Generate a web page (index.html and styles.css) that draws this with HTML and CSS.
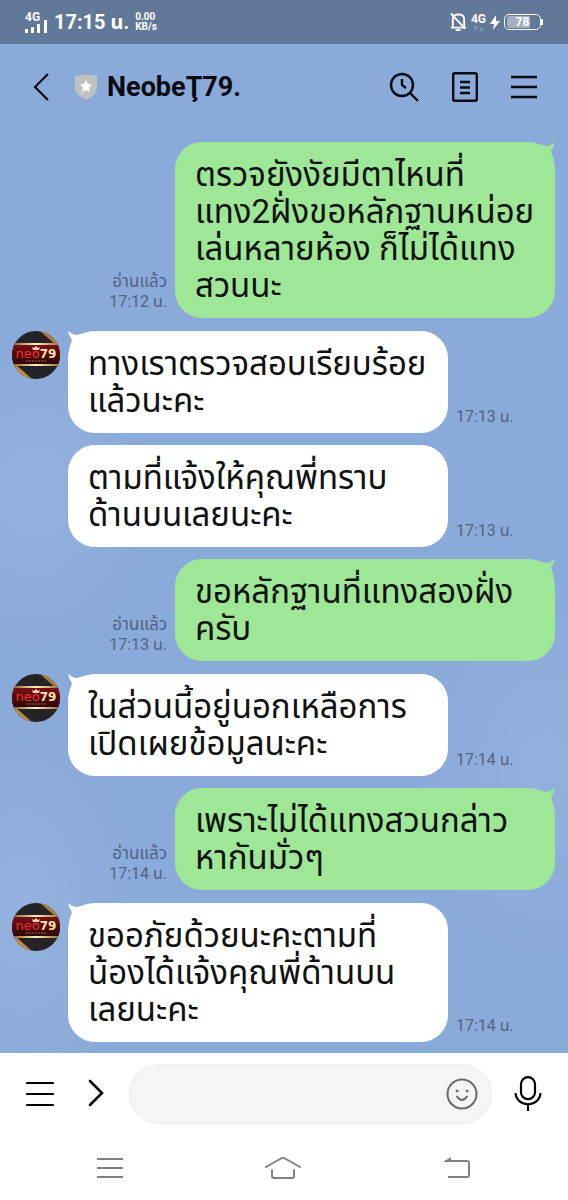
FILE: index.html
```
<!DOCTYPE html>
<html lang="th">
<head>
    <meta charset="UTF-8">
    <meta name="viewport" content="width=device-width, initial-scale=1.0">
    <title>NeobeŢ79.</title>
    <link rel="stylesheet" href="styles.css">
</head>
<body>
    <!-- Shared avatar drawing -->
    <svg class="defs" aria-hidden="true">
        <defs>
            <linearGradient id="gold" x1="0" x2="1">
                <stop offset="0" stop-color="#8a5a1c"/>
                <stop offset="0.5" stop-color="#fff3c4"/>
                <stop offset="1" stop-color="#9a6a24"/>
            </linearGradient>
            <linearGradient id="red" x1="0" y1="0" x2="0" y2="1">
                <stop offset="0" stop-color="#7c1016"/>
                <stop offset="1" stop-color="#2a0507"/>
            </linearGradient>
            <clipPath id="round"><circle cx="24" cy="24" r="24"/></clipPath>
        </defs>
        <symbol id="avatar" viewBox="0 0 48 48">
            <g clip-path="url(#round)">
                <rect width="48" height="48" fill="#242426"/>
                <path d="M28 0L44 14H48V0z" fill="#b27c32"/>
                <path d="M34 0L48 12V0z" fill="#3a2a18"/>
                <path d="M3 33L20 48H14L0 36z" fill="#c08a3c"/>
                <rect y="13" width="48" height="21" fill="url(#red)"/>
                <rect y="12" width="48" height="2" fill="url(#gold)"/>
                <rect y="33" width="48" height="2" fill="url(#gold)"/>
                <path d="M21 19l-1-3 2 1 2-2 2 2 2-1-1 3z" fill="#ffd9b0"/>
                <path d="M14 30H34" stroke="#9a6a34" stroke-dasharray="2 1"/>
            </g>
        </symbol>
    </svg>

    <div class="status-bar">
        <div class="status-left">
            <div class="signal">
                <span>4G</span>
                <svg width="23" height="13" viewBox="0 0 23 13" fill="#fff">
                    <rect x="0" y="9" width="3" height="4"/>
                    <rect x="6" y="7" width="3" height="6"/>
                    <rect x="12" y="4" width="3" height="9"/>
                    <rect x="19" y="0" width="3" height="13"/>
                </svg>
            </div>
            <span class="clock">17:15 น.</span>
            <div class="speed">0.00<br>KB/s</div>
        </div>
        <div class="status-right">
            <svg width="17" height="20" viewBox="0 0 18 20" fill="none" stroke="#fff" stroke-width="2">
                <path d="M3 16V7C3 4 5 2 9 2s6 2 6 5v9M1 16h16"/>
                <path d="M1 1l15 16"/>
                <path d="M6 18.500h5"/>
            </svg>
            <div class="net">
                <span>4G</span>
                <svg width="11" height="5" viewBox="0 0 11 5" fill="#8193ae"><path d="M0 0h5L2.500 5zM6 5h5L8.500 0z"/></svg>
            </div>
            <svg width="10" height="15" viewBox="0 0 10 15" fill="#fff"><path d="M6 0L0 9h4l-1 6 7-9H6z"/></svg>
            <div class="battery">78</div>
        </div>
    </div>

    <header class="header">
        <button class="icon-btn" aria-label="Back">
            <svg width="18" height="30" viewBox="0 0 18 30" fill="none" stroke="#080a10" stroke-width="2.200"><path d="M17 2L4 15l13 13"/></svg>
        </button>
        <svg class="shield" width="24" height="26" viewBox="0 0 24 26">
            <path d="M1 2Q12-1 23 2V15Q22 21 12 26Q2 21 1 15z" fill="#bfc1c2"/>
            <path d="M12 6l2 4 4 .5-3 3 .8 4.500L12 16l-3.800 2L9 13.500l-3-3 4-.5z" fill="#fff"/>
        </svg>
        <h1>NeobeŢ79.</h1>
        <div class="header-actions">
            <button class="icon-btn" aria-label="Search">
                <svg width="30" height="30" viewBox="0 0 30 30" fill="none" stroke="#080a10" stroke-width="2.400"><circle cx="13" cy="13" r="11"/><path d="M21 21l8 8M13 7v6l4 3"/></svg>
            </button>
            <button class="icon-btn" aria-label="Notes">
                <svg width="26" height="30" viewBox="0 0 26 30" fill="none" stroke="#080a10" stroke-width="2.400"><rect x="1.200" y="1.200" width="23.600" height="27.600" rx="1.500"/><path d="M8 10h10M8 15.500h10M8 21h10"/></svg>
            </button>
            <button class="icon-btn" aria-label="Menu">
                <svg width="26" height="26" viewBox="0 0 26 26" stroke="#080a10" stroke-width="2.400"><path d="M0 3h26M0 13h26M0 23h26"/></svg>
            </button>
        </div>
    </header>

    <main class="chat">
        <div class="message out">
            <div class="meta"><span class="read">อ่านแล้ว</span><br>17:12 น.</div>
            <div class="bubble tail">ตรวจยังงัยมีตาไหนที่<br>แทง2ฝั่งขอหลักฐานหน่อย<br>เล่นหลายห้อง ก็ไม่ได้แทง<br>สวนนะ</div>
        </div>
        <div class="message in">
            <div class="avatar">
                <svg width="48" height="48"><use href="#avatar"/></svg>
                <div class="logo">neo<b>79</b></div>
            </div>
            <div class="bubble tail">ทางเราตรวจสอบเรียบร้อย<br>แล้วนะคะ</div>
            <div class="meta">17:13 น.</div>
        </div>
        <div class="message in next">
            <div class="bubble">ตามที่แจ้งให้คุณพี่ทราบ<br>ด้านบนเลยนะคะ</div>
            <div class="meta">17:13 น.</div>
        </div>
        <div class="message out">
            <div class="meta"><span class="read">อ่านแล้ว</span><br>17:13 น.</div>
            <div class="bubble tail">ขอหลักฐานที่แทงสองฝั่ง<br>ครับ</div>
        </div>
        <div class="message in">
            <div class="avatar">
                <svg width="48" height="48"><use href="#avatar"/></svg>
                <div class="logo">neo<b>79</b></div>
            </div>
            <div class="bubble tail">ในส่วนนี้อยู่นอกเหลือการ<br>เปิดเผยข้อมูลนะคะ</div>
            <div class="meta">17:14 น.</div>
        </div>
        <div class="message out">
            <div class="meta"><span class="read">อ่านแล้ว</span><br>17:14 น.</div>
            <div class="bubble tail">เพราะไม่ได้แทงสวนกล่าว<br>หากันมั่วๆ</div>
        </div>
        <div class="message in">
            <div class="avatar">
                <svg width="48" height="48"><use href="#avatar"/></svg>
                <div class="logo">neo<b>79</b></div>
            </div>
            <div class="bubble tail">ขออภัยด้วยนะคะตามที่<br>น้องได้แจ้งคุณพี่ด้านบน<br>เลยนะคะ</div>
            <div class="meta">17:14 น.</div>
        </div>
    </main>

    <footer class="composer">
        <button class="icon-btn" aria-label="Open menu">
            <svg width="28" height="26" viewBox="0 0 28 26" stroke="#000" stroke-width="2.200" stroke-linecap="round"><path d="M1 2h26M1 13h26M1 24h26"/></svg>
        </button>
        <button class="icon-btn expand" aria-label="Expand">
            <svg width="18" height="30" viewBox="0 0 18 30" fill="none" stroke="#000" stroke-width="2.600" stroke-linecap="round"><path d="M3 2l12 12L3 26"/></svg>
        </button>
        <div class="field">
            <input type="text" aria-label="Message">
            <button class="icon-btn" aria-label="Emoji">
                <svg width="32" height="32" viewBox="0 0 32 32" fill="none" stroke="#6c6c6c" stroke-width="2" stroke-linecap="round"><circle cx="16" cy="16" r="14.500"/><path d="M11 18.500q5 7 10 0"/><circle cx="11" cy="13" r="1" fill="#6c6c6c" stroke-width="1"/><circle cx="21" cy="13" r="1" fill="#6c6c6c" stroke-width="1"/></svg>
            </button>
        </div>
        <button class="icon-btn" aria-label="Voice message">
            <svg width="28" height="36" viewBox="0 0 28 36" fill="none" stroke="#000" stroke-width="2.200"><rect x="7" y="1.200" width="14" height="22" rx="7"/><path d="M1.500 17c1 15 24 15 25 0M14 28.500V35"/></svg>
        </button>
    </footer>

    <nav class="system-nav">
        <button class="icon-btn" aria-label="Recent apps">
            <svg width="26" height="22" viewBox="0 0 26 22" stroke="#808080" stroke-width="2"><path d="M0 2h26M0 11h26M0 20h26"/></svg>
        </button>
        <button class="icon-btn" aria-label="Home">
            <svg width="38" height="24" viewBox="0 0 38 24" fill="none" stroke="#808080" stroke-width="2" stroke-linecap="round"><path d="M2 11L16 3q3-2 6 0l14 8M8 14v6q0 2 2 2h18q2 0 2-2v-6"/></svg>
        </button>
        <button class="icon-btn" aria-label="Back">
            <svg width="28" height="22" viewBox="0 0 28 22" fill="none" stroke="#808080" stroke-width="2"><path d="M2 4h22q2 0 2 2v12q0 2-2 2H5"/><path d="M0 5L8 0v5z" fill="#808080" stroke="none"/></svg>
        </button>
    </nav>
</body>
</html>
```
FILE: styles.css
```
* {
    box-sizing: border-box;
}

body {
    font-family: Roboto, "Noto Sans Thai", "Noto Sans", sans-serif;
    margin: 0;
    min-height: 100vh;
    display: flex;
    flex-direction: column;
    color: #080a10;
    background-color: #8aaada;
    background-image:
        radial-gradient(ellipse at 6% 41%, rgba(255, 255, 255, 0.09), transparent 16%),
        radial-gradient(ellipse at 4% 76%, rgba(255, 255, 255, 0.09), transparent 15%),
        radial-gradient(ellipse at 96% 64%, rgba(255, 255, 255, 0.08), transparent 18%);
}

svg {
    display: block;
    flex: none;
}

.defs {
    position: absolute;
    width: 0;
    height: 0;
}

.icon-btn {
    padding: 0;
    border: none;
    background: none;
    cursor: pointer;
}

/* Phone status bar */
.status-bar {
    height: 44px;
    padding: 0 27px 0 25px;
    display: flex;
    justify-content: space-between;
    align-items: center;
    background-color: #617899;
    color: #fff;
    font-weight: bold;
}

.status-left,
.status-right {
    display: flex;
    align-items: center;
}

.status-left {
    gap: 6px;
}

.status-right {
    gap: 4px;
}

.signal,
.net {
    font-size: 12px;
    line-height: 10px;
}

.signal svg {
    margin-top: -2px;
}

.net svg {
    margin: 2px 2px 0;
}

.clock {
    font-size: 20px;
    line-height: 24px;
}

.speed {
    font-size: 10px;
    line-height: 10px;
}

.battery {
    position: relative;
    width: 37px;
    height: 16px;
    padding: 1px 2px;
    border: 1px solid #fff;
    border-radius: 5px;
    font-size: 12px;
    line-height: 12px;
    text-align: center;
    background: linear-gradient(to right, #a3b0c4 75%, transparent 75%) content-box;
}

.battery::after {
    content: "";
    position: absolute;
    right: -3px;
    top: 4px;
    width: 2px;
    height: 6px;
    background-color: #fff;
}

/* Chat header */
.header {
    height: 86px;
    padding: 0 31px;
    display: flex;
    align-items: center;
}

.shield {
    margin: 0 9px 0 25px;
}

h1 {
    margin: 0;
    font-size: 27px;
    line-height: 32px;
    font-weight: bold;
}

.header-actions {
    margin-left: auto;
    display: flex;
    align-items: center;
    gap: 33px;
}

/* Messages */
.chat {
    flex: 1;
    padding: 12px 13px 11px 12px;
}

.message {
    display: flex;
    align-items: flex-end;
    gap: 8px;
    margin-top: 12px;
}

.message:first-child {
    margin-top: 0;
}

.out {
    justify-content: flex-end;
}

.out + .in {
    margin-top: 13px;
}

.next {
    padding-left: 56px;
}

.avatar {
    position: relative;
    flex: none;
    align-self: flex-start;
}

.logo {
    position: absolute;
    top: 16px;
    left: 0;
    width: 100%;
    font-family: "DejaVu Sans", sans-serif;
    font-size: 13px;
    line-height: 14px;
    text-align: center;
    color: #f0302e;
}

.logo b {
    font-size: 12px;
    color: #ffe2a8;
}

.bubble {
    position: relative;
    flex: 0 1 380px;
    padding: 14px 20px;
    border-radius: 27px;
    background-color: #fff;
    font-size: 33px;
    line-height: 37px;
    white-space: nowrap;
    color: #111;
}

.out .bubble {
    background-color: #9ee796;
}

.tail::before {
    content: "";
    position: absolute;
    top: 0;
    left: 0;
    width: 20px;
    height: 20px;
    background-color: inherit;
    clip-path: path("M0 0Q5 4 9 4L20 1L20 20L1 18L4 9Q1 5 0 0z");
}

.out .tail::before {
    left: auto;
    right: 0;
    transform: scaleX(-1);
}

.meta {
    padding-bottom: 6px;
    font-size: 16px;
    line-height: 20px;
    color: #4f6485;
    white-space: nowrap;
}

.out .meta {
    text-align: right;
}

.read {
    font-size: 17px;
}

/* Message box */
.composer {
    height: 82px;
    padding: 0 26px;
    display: flex;
    align-items: center;
    background-color: #fff;
}

.expand {
    margin: 0 24px 0 33px;
}

.field {
    flex: 1;
    min-width: 0;
    height: 60px;
    margin-right: 22px;
    padding-right: 13px;
    display: flex;
    align-items: center;
    border: 1px solid #ececec;
    border-radius: 30px;
    background-color: #f5f5f5;
}

.field input {
    flex: 1;
    min-width: 0;
    padding: 0 20px;
    border: none;
    outline: none;
    background: none;
    font-size: 24px;
}

.system-nav {
    height: 65px;
    padding: 0 97px;
    display: flex;
    justify-content: space-between;
    align-items: center;
    background-color: #fff;
}
```
